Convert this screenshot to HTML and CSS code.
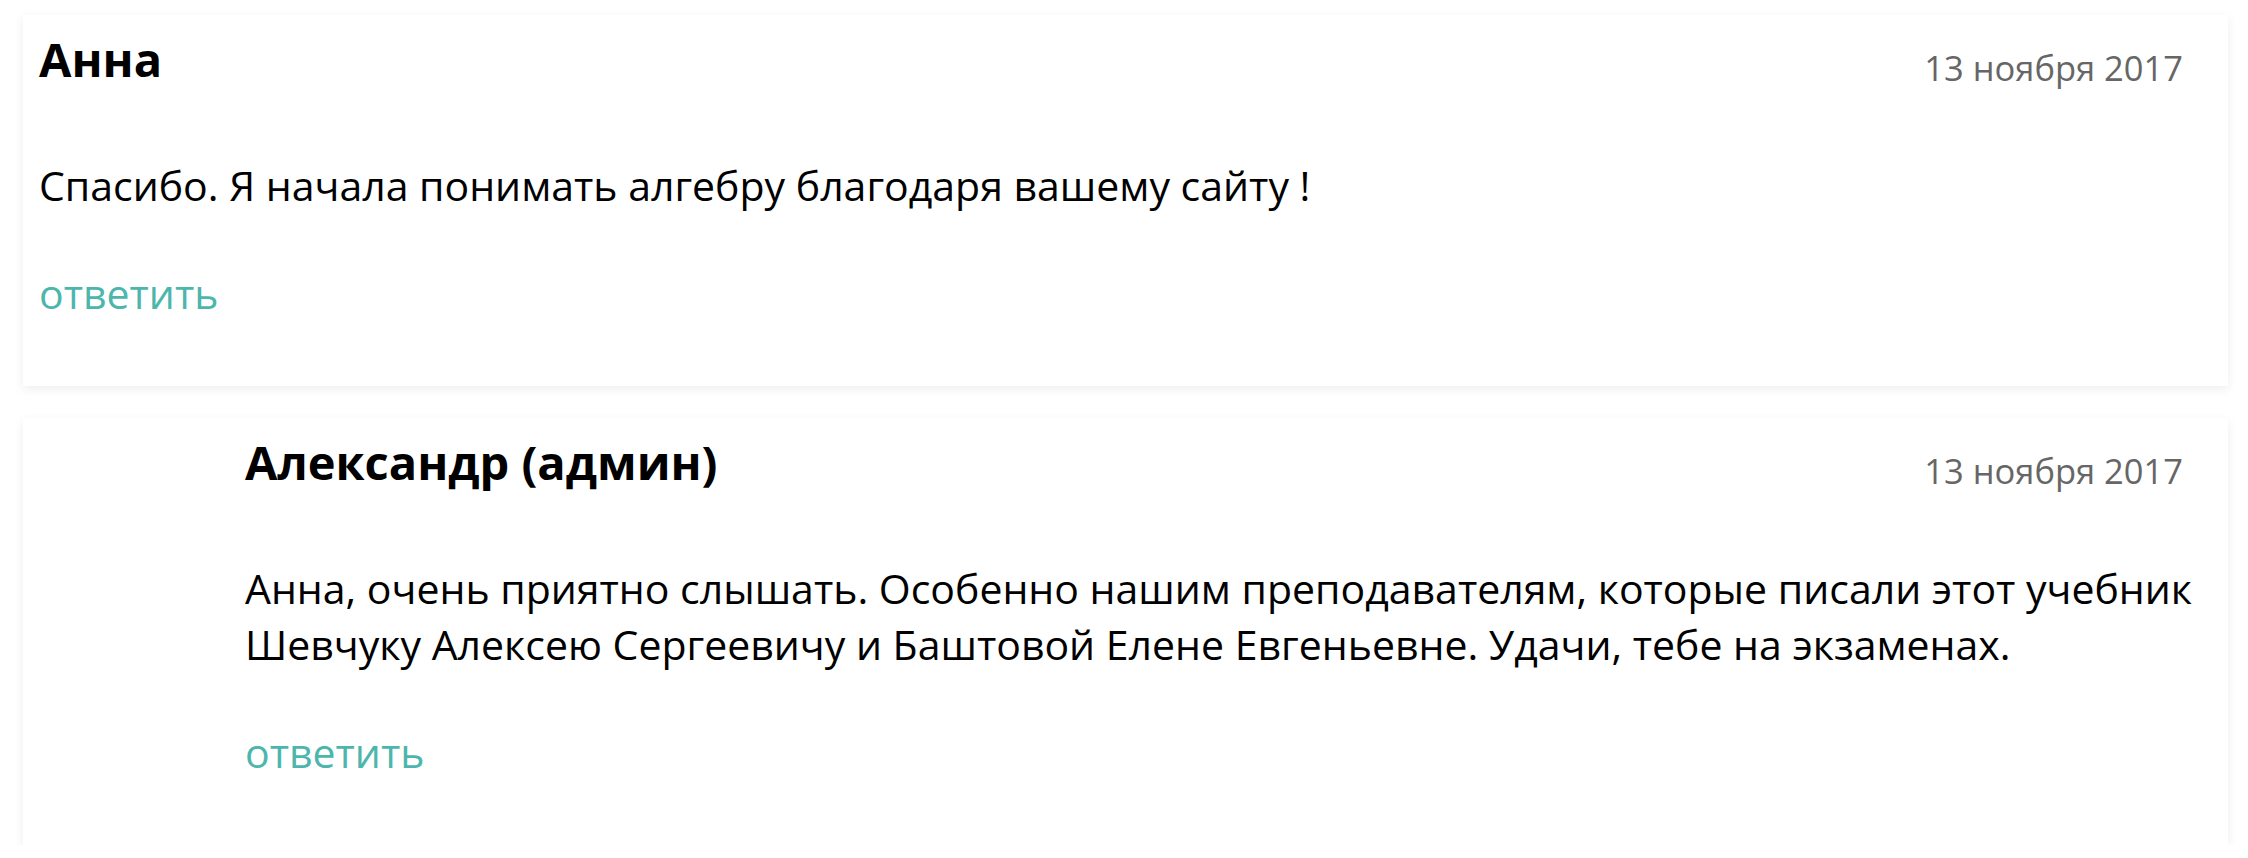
FILE: index.html
```html
<!DOCTYPE html>
<html lang="ru">
<head>
    <meta charset="UTF-8">
    <title>Комментарии</title>
    <link rel="stylesheet" href="styles.css">
</head>
<body>
    <div class="comments">
        <div class="comment">
            <div class="comment-head">
                <span class="comment-author">Анна</span>
                <span class="comment-date">13 ноября 2017</span>
            </div>
            <p class="comment-text">Спасибо. Я начала понимать алгебру благодаря вашему сайту !</p>
            <a class="comment-reply" href="#">ответить</a>
        </div>

        <div class="comment comment-child">
            <div class="comment-head">
                <span class="comment-author">Александр (админ)</span>
                <span class="comment-date">13 ноября 2017</span>
            </div>
            <p class="comment-text">Анна, очень приятно слышать. Особенно нашим преподавателям, которые писали этот учебник Шевчуку Алексею Сергеевичу и Баштовой Елене Евгеньевне. Удачи, тебе на экзаменах.</p>
            <a class="comment-reply" href="#">ответить</a>
        </div>
    </div>
</body>
</html>
```

FILE: styles.css
```css
body {
    margin: 0;
    padding: 15px 20px 0 23px;
    background-color: #fff;
    font-family: "Open Sans", "Noto Sans", sans-serif;
    color: #000;
}
.comments {
    display: flex;
    flex-direction: column;
    gap: 32px;
}
.comment {
    background-color: #fff;
    padding: 14px 45px 65px 16px;
    box-shadow: 0 3px 10px rgba(0, 0, 0, 0.07);
}
.comment-child {
    padding-left: 222px;
}
.comment-head {
    display: flex;
    justify-content: space-between;
    align-items: flex-start;
}
.comment-author {
    font-size: 47px;
    font-weight: bold;
    line-height: 60px;
}
.comment-date {
    margin-top: 15px;
    font-size: 34.5px;
    line-height: 48px;
    color: #666;
}
.comment-text {
    margin: 65px -40px 0 0;
    font-size: 41px;
    line-height: 56px;
}
.comment-reply {
    display: block;
    margin-top: 52px;
    font-size: 41px;
    line-height: 56px;
    color: #4db6ac;
    text-decoration: none;
}
```
